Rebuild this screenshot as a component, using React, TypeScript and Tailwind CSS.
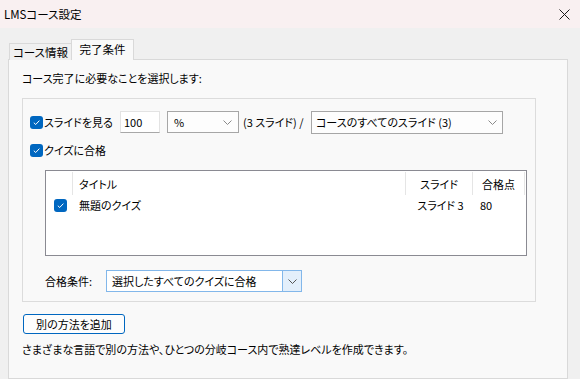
import React from "react";

function Check() {
  return (
    <span className="w-[13px] h-[13px] rounded-[3px] bg-[#0067c0] flex items-center justify-center shrink-0">
      <svg width="9" height="9" viewBox="0 0 9 9">
        <path d="M1.8 4.7 L3.7 6.5 L7.4 2.6" stroke="white" strokeWidth="1" fill="none" />
      </svg>
    </span>
  );
}

function Chevron({ color = "#8a8a8a" }: { color?: string }) {
  return (
    <svg width="9" height="5" viewBox="0 0 9 5">
      <path d="M0.5 0.5 L4.5 4.5 L8.5 0.5" stroke={color} strokeWidth="1" fill="none" />
    </svg>
  );
}

export default function App() {
  return (
    <div className="w-[580px] h-[379px] overflow-hidden bg-[#f0f0f0] text-[11px] leading-[16px] text-[#000] font-['Noto_Sans_CJK_JP','Noto_Sans',sans-serif] [font-feature-settings:'palt'] flex flex-col">
      {/* Title bar */}
      <div className="h-[28px] shrink-0 bg-[#f9f0f1] flex items-center justify-between pl-[4px] pr-[10px]">
        <span className="text-[11.5px]">LMSコース設定</span>
        <svg width="11" height="11" viewBox="0 0 11 11">
          <path d="M0.5 0.5 L10.5 10.5 M10.5 0.5 L0.5 10.5" stroke="#1a1a1a" strokeWidth="1" />
        </svg>
      </div>

      {/* Tabs */}
      <div className="pt-[10px] pl-[9px] flex items-end h-[31px] shrink-0 relative z-10">
        <div className="h-[17px] mb-[-1px] border border-b-0 border-r-0 border-[#d9d9d9] bg-[#f0f0f0] flex items-center justify-center w-[62px] whitespace-nowrap text-[11.5px]">
          コース情報
        </div>
        <div className="h-[21px] mb-[-1px] border border-b-0 border-[#d9d9d9] bg-[#f9f9f9] flex items-center justify-center w-[63px] pb-[2px] whitespace-nowrap text-[11.5px]">
          完了条件
        </div>
      </div>

      {/* Panel */}
      <div className="ml-[8px] w-[560px] flex-1 border border-[#d9d9d9] bg-[#f9f9f9] px-[13px] pt-[10px]">
        <div>コース完了に必要なことを選択します:</div>

        {/* Group */}
        <div className="mt-[12px] w-[514px] border border-[#dcdcdc] pt-[12px] pb-[9px]">
          {/* Row 1 */}
          <div className="flex items-center h-[22px] pl-[7px]">
            <Check />
            <span className="ml-[1px] w-[76px] whitespace-nowrap">スライドを見る</span>
            <div className="w-[40px] h-[22px] bg-white border border-[#e3e3e3] border-b-[#a8a8a8] pl-[3px] flex items-center">
              100
            </div>
            <div className="ml-[7px] w-[72px] h-[22px] bg-[#fdfdfd] border border-[#a6a6a6] pl-[6px] pr-[6px] flex items-center justify-between">
              <span>%</span>
              <Chevron />
            </div>
            <span className="ml-[4px] w-[68px] whitespace-nowrap">(3 スライド) /</span>
            <div className="w-[192px] h-[23px] bg-[#fdfdfd] border border-[#a6a6a6] pl-[4px] pr-[5px] flex items-center justify-between">
              <span>コースのすべてのスライド (3)</span>
              <Chevron />
            </div>
          </div>

          {/* Row 2 */}
          <div className="flex items-center h-[16px] pl-[7px] mt-[9px]">
            <Check />
            <span className="ml-[1px]">クイズに合格</span>
          </div>

          {/* List */}
          <div className="ml-[22px] mt-[12px] w-[482px] h-[86px] bg-white border border-[#8a8a92]">
            <div className="flex h-[25px] items-center">
              <div className="w-[27px] h-[23px] border-r border-[#e5e5e5]" />
              <div className="w-[333px] h-[23px] border-r border-[#e5e5e5] pl-[6px] flex items-center">タイトル</div>
              <div className="w-[67px] h-[23px] border-r border-[#e5e5e5] flex items-center justify-center">スライド</div>
              <div className="w-[52px] h-[23px] border-r border-[#e5e5e5] flex items-center justify-center">合格点</div>
            </div>
            <div className="flex h-[18px] items-center">
              <div className="w-[27px] flex justify-center pl-[1px]">
                <Check />
              </div>
              <div className="w-[334px] pl-[6px]">無題のクイズ</div>
              <div className="w-[67px] text-center">スライド 3</div>
              <div className="w-[52px] pl-[6px]">80</div>
            </div>
          </div>

          {/* Pass condition */}
          <div className="ml-[22px] mt-[14px] flex items-center h-[22px]">
            <span className="w-[61px]">合格条件:</span>
            <div className="w-[196px] h-[22px] bg-white border border-[#82b7ea] flex items-center">
              <span className="flex-1 pl-[5px]">選択したすべてのクイズに合格</span>
              <div className="w-[19px] h-full bg-[#e3effb] border-l border-[#82b7ea] flex items-center justify-center">
                <Chevron color="#555" />
              </div>
            </div>
          </div>
        </div>

        {/* Button */}
        <div className="mt-[12px] ml-[1px] w-[102px] h-[20px] border border-[#0067c0] rounded-[3px] bg-[#fdfdfd] flex items-center justify-center">
          別の方法を追加
        </div>

        <div className="mt-[7px] whitespace-nowrap">
          さまざまな言語で別の方法や、ひとつの分岐コース内で熟達レベルを作成できます。
        </div>
      </div>
    </div>
  );
}
